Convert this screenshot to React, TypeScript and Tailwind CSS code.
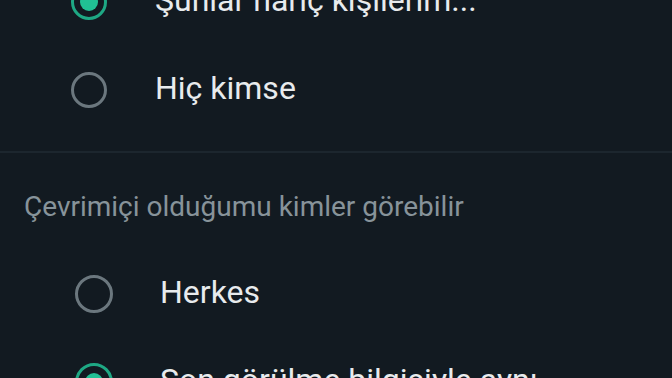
import React from 'react';

interface RowProps {
  label: string;
  selected?: boolean;
  big?: boolean;
}

const Radio: React.FC<{ selected?: boolean; big?: boolean }> = ({ selected, big }) => (
  <div
    className={`flex shrink-0 items-center justify-center rounded-full border-[3px] ${
      big ? 'w-[38px] h-[38px]' : 'w-[36px] h-[36px]'
    } ${selected ? 'border-[#1ea884]' : 'border-[#6b777e]'}`}
  >
    {selected && <div className="w-[18px] h-[18px] rounded-full bg-[#21c094]"></div>}
  </div>
);

const Row: React.FC<RowProps> = ({ label, selected, big }) => (
  <div className={`flex items-center h-[88px] ${big ? 'pl-[75px]' : 'pl-[71px]'}`}>
    <Radio selected={selected} big={big} />
    <span
      className={`mb-[4px] text-[#e8ebed] leading-none whitespace-nowrap ${
        big ? 'ml-[47px] text-[32px]' : 'ml-[48px] text-[32px]'
      }`}
    >
      {label}
    </span>
  </div>
);

export default function App() {
  return (
    <div className="w-[672px] h-[378px] overflow-hidden bg-[#121a21] font-['Roboto',sans-serif]">
      {/* first group, scrolled partly out of view */}
      <div className="-mt-[42px]">
        <Row label="Şunlar hariç kişilerim..." selected />
        <Row label="Hiç kimse" />
      </div>

      <div className="mt-[17px] h-[2px] bg-[#1c262e]"></div>

      <div className="h-[97px] pl-[24px] pt-[40px]">
        <div className="text-[28px] leading-none text-[#87939a] whitespace-nowrap">
          Çevrimiçi olduğumu kimler görebilir
        </div>
      </div>

      <div>
        <Row label="Herkes" big />
        <Row label="Son görülme bilgisiyle aynı" selected big />
      </div>
    </div>
  );
}
